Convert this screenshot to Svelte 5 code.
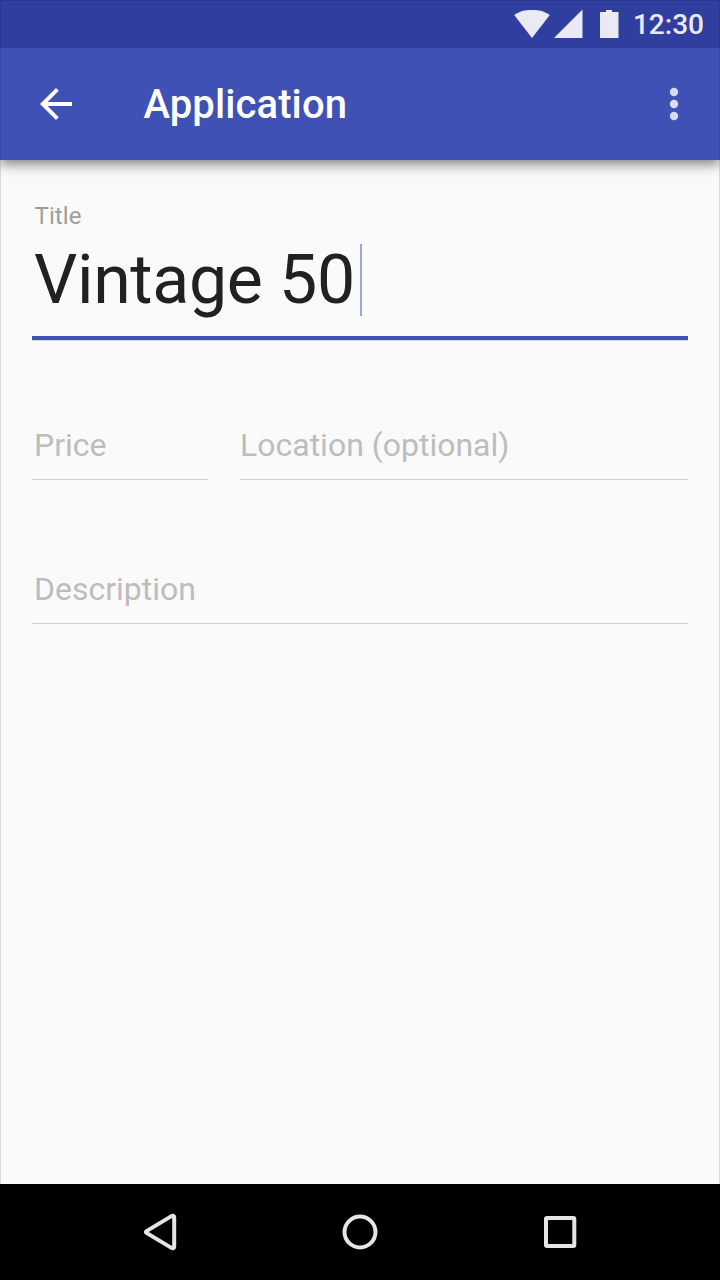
<script>
  const title = 'Vintage 50';
</script>

<div class="screen">
  <header>
    <div class="status">
      <svg width="106" height="30" viewBox="0 0 106 30" fill="#eaeaf6">
        <path d="M0.200 6.100C5.200 2.200 11.200 1 18 1S30.800 2.200 35.800 6.100L18 29Z" />
        <path d="M40 29L68.500 .5V29Z" />
        <path d="M86 3H92V1H98V3H104.500V29H86Z" />
      </svg>
      <span class="time">12:30</span>
    </div>
    <div class="toolbar">
      <svg width="48" height="48" viewBox="0 0 24 24" fill="#fff">
        <path d="M20 11H7.830l5.590-5.590L12 4l-8 8 8 8 1.410-1.410L7.830 13H20v-2z" />
      </svg>
      <h1>Application</h1>
      <svg width="48" height="48" viewBox="0 0 24 24" fill="#d9dcf0">
        <circle cx="12" cy="6" r="2.080" />
        <circle cx="12" cy="12" r="2.080" />
        <circle cx="12" cy="18" r="2.080" />
      </svg>
    </div>
  </header>

  <main>
    <div class="focused">
      <div class="label">Title</div>
      <div class="value"><span>{title}</span><i class="caret"></i></div>
    </div>
    <div class="row">
      <div class="field price">Price</div>
      <div class="field location">Location (optional)</div>
    </div>
    <div class="field">Description</div>
  </main>

  <nav>
    <svg width="48" height="48" viewBox="0 0 48 48">
      <path d="M10.500 23.100L35 8.400Q38.200 6.900 38.200 9.500V38.500Q38.200 41.100 35 39.600L10.500 24.900Q9.200 24 10.500 23.100Z" />
    </svg>
    <svg width="48" height="48" viewBox="0 0 48 48"><circle cx="24" cy="24" r="15.500" /></svg>
    <svg width="48" height="48" viewBox="0 0 48 48"><rect x="10" y="10" width="28.300" height="28" rx="1" /></svg>
  </nav>
  <div class="frame"></div>
</div>

<style>
  :global(body) { margin: 0; }
  .screen {
    position: relative;
    display: flex;
    flex-direction: column;
    width: 720px;
    height: 1280px;
    background: #fafafa;
    font-family: Roboto, sans-serif;
    overflow: hidden;
  }
  header { background: #3f51b5; box-shadow: 0 4px 12px rgba(0, 0, 0, .5); }
  .status {
    display: flex;
    align-items: center;
    justify-content: flex-end;
    gap: 13px;
    height: 48px;
    padding-right: 16px;
    background: #303f9f;
  }
  .time { padding-top: 2px; color: #eaeaf6; font-size: 28px; font-weight: 500; line-height: 46px; }
  .toolbar { display: flex; align-items: center; height: 112px; padding: 0 22px 0 32px; }
  h1 { flex: 1; margin: 0 0 0 63.500px; padding-top: 2px; color: #fff; font-size: 40px; font-weight: 500; line-height: 46px; letter-spacing: .1px; }
  main { flex: 1; padding: 40px 32px 0; }
  .focused { height: 136px; border-bottom: 4px solid #3f51b5; box-shadow: 0 1px #d5d9f0; }
  .label { padding-left: 2.500px; color: #9e9e9e; font-size: 24px; line-height: 32px; letter-spacing: .1px; }
  .value {
    display: flex;
    align-items: center;
    margin-top: 12px;
    padding-left: 2px;
    color: #212121;
    font-size: 68px;
    line-height: 72px;
    letter-spacing: -.34px;
  }
  .caret { width: 2px; height: 72px; margin-left: 5.500px; background: #9fa8da; }
  .row { display: flex; gap: 32px; margin: 76px 0 80px; }
  .field {
    box-sizing: border-box;
    height: 64px;
    padding-left: 2px;
    border-bottom: 1px solid #cfcfcf;
    color: #bdbdbd;
    font-size: 32px;
    line-height: 58px;
  }
  .price { width: 176px; }
  .location { flex: 1; padding-left: 0; }
  nav { display: flex; justify-content: center; gap: 152px; height: 72px; padding-top: 24px; background: #000; }
  nav svg { fill: none; stroke: #e5e5e5; stroke-width: 4; }
  .frame {
    position: absolute;
    inset: 0 0 96px;
    border: solid rgba(0, 0, 0, .12);
    border-width: 1px 1px 0;
  }
</style>
